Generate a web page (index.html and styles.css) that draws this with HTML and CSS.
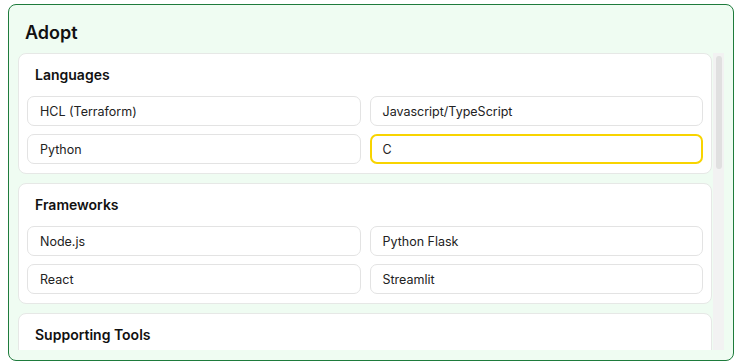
FILE: index.html
```html
<!DOCTYPE html>
<html lang="en">
<head>
    <meta charset="UTF-8">
    <meta name="viewport" content="width=device-width, initial-scale=1.0">
    <title>Tech Radar | Adopt</title>
    <link rel="stylesheet" href="styles.css">
</head>
<body>
    <div class="ring-panel">
        <h1 class="ring-title">Adopt</h1>
        <div class="ring-scroll">
            <div class="ring-list">
                <div class="quadrant-card">
                    <h2 class="quadrant-title">Languages</h2>
                    <div class="tech-grid">
                        <div class="tech-item">HCL (Terraform)</div>
                        <div class="tech-item">Javascript/TypeScript</div>
                        <div class="tech-item">Python</div>
                        <div class="tech-item selected">C</div>
                    </div>
                </div>
                <div class="quadrant-card">
                    <h2 class="quadrant-title">Frameworks</h2>
                    <div class="tech-grid">
                        <div class="tech-item">Node.js</div>
                        <div class="tech-item">Python Flask</div>
                        <div class="tech-item">React</div>
                        <div class="tech-item">Streamlit</div>
                    </div>
                </div>
                <div class="quadrant-card">
                    <h2 class="quadrant-title">Supporting Tools</h2>
                    <div class="tech-grid">
                        <div class="tech-item">GitHub Actions</div>
                        <div class="tech-item">Docker</div>
                        <div class="tech-item">Terraform Cloud</div>
                        <div class="tech-item">Jest</div>
                        <div class="tech-item">Pytest</div>
                        <div class="tech-item">ESLint</div>
                    </div>
                </div>
            </div>
            <div class="scroll-track">
                <div class="scroll-thumb"></div>
            </div>
        </div>
    </div>
</body>
</html>
```

FILE: styles.css
```css
:root {
    --panel-border: #1e7b3c;
    --panel-background: #effcf2;
    --card-background: #ffffff;
    --card-border: #e6e8e6;
    --item-border: #e3e3e3;
    --highlight: #f8d400;
    --text-color: #1b1b1b;
}

* {
    margin: 0;
    padding: 0;
    box-sizing: border-box;
    font-family: 'Inter', 'Liberation Sans', sans-serif;
}

body {
    padding: 4px 5px 0 8px;
    background: #ffffff;
    color: var(--text-color);
}

.ring-panel {
    height: 357px;
    display: flex;
    flex-direction: column;
    padding: 16px 9px 10px 9px;
    background: var(--panel-background);
    border: 1px solid var(--panel-border);
    border-radius: 8px;
}

.ring-title {
    font-size: 18px;
    font-weight: 600;
    line-height: 24px;
    margin: 0 0 8px 7px;
    color: #111;
}

/* lista con barra de scroll dibujada a mano */
.ring-scroll {
    flex: 1;
    min-height: 0;
    display: flex;
    gap: 1px;
}

.ring-list {
    flex: 1;
    min-width: 0;
    overflow: hidden;
    display: flex;
    flex-direction: column;
    gap: 9px;
}

.scroll-track {
    width: 11px;
    flex-shrink: 0;
    padding: 3px 2px 0 3px;
    background: #f2f2f2;
}

.scroll-thumb {
    height: 113px;
    background: #e0e0e0;
    border-radius: 3px;
}

.quadrant-card {
    flex-shrink: 0;
    padding: 8px 8px 9px;
    background: var(--card-background);
    border: 1px solid var(--card-border);
    border-radius: 8px;
}

.quadrant-title {
    font-size: 14px;
    font-weight: 600;
    line-height: 20px;
    margin: 3px 8px 11px;
    color: #111;
}

.tech-grid {
    display: grid;
    grid-template-columns: 1fr 1fr;
    gap: 8px 9px;
}

.tech-item {
    height: 30px;
    display: flex;
    align-items: center;
    padding: 0 12px;
    font-size: 12.5px;
    color: #222;
    background: #ffffff;
    border: 1px solid var(--item-border);
    border-radius: 7px;
}

.tech-item.selected {
    border: 2px solid var(--highlight);
    padding-left: 11px;
}
```
